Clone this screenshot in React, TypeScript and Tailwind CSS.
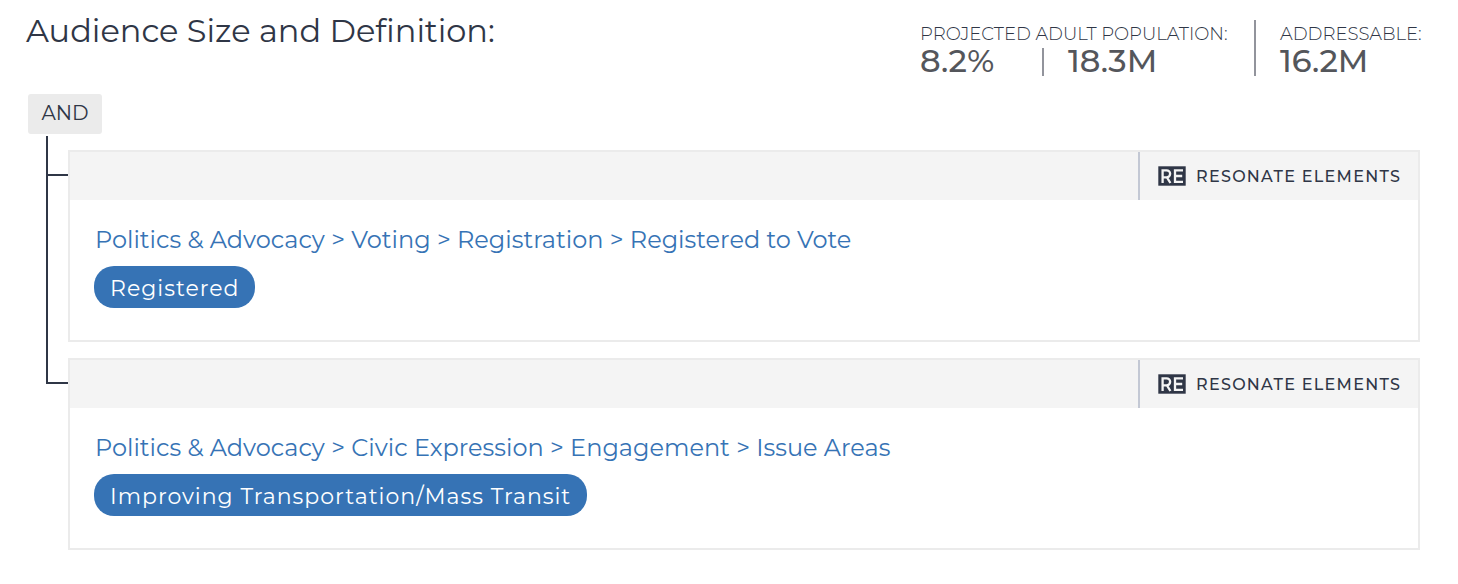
type Rule = { path: string[]; value: string };

const rules: Rule[] = [
  {
    path: ["Politics & Advocacy", "Voting", "Registration", "Registered to Vote"],
    value: "Registered",
  },
  {
    path: ["Politics & Advocacy", "Civic Expression", "Engagement", "Issue Areas"],
    value: "Improving Transportation/Mass Transit",
  },
];

function ElementsLogo() {
  return (
    <svg viewBox="0 0 28 20" className="h-5 w-7 shrink-0" aria-hidden="true">
      <rect x="0.3" y="0.3" width="27.4" height="19.4" fill="#2f3646" />
      <g fill="none" stroke="#f4f4f4" strokeWidth="2.3">
        <path d="M4.6 17V4.3H8.6A3.3 3.3 0 0 1 8.6 11.4H4.6M8.8 11.2L12.4 17" />
        <path d="M25 4.3H17V15.8H25M17 10H24.2" />
      </g>
    </svg>
  );
}

function StatLabel({ children }: { children: string }) {
  return (
    <div className="pt-1 text-[18px] leading-5 font-light whitespace-nowrap">{children}</div>
  );
}

function Stat({ children }: { children: string }) {
  return (
    <div className="pb-0.5 text-[32px] leading-[26px] font-medium text-[#54565b]">{children}</div>
  );
}

function RuleRow({ rule, last }: { rule: Rule; last: boolean }) {
  return (
    <li className="group flex">
      <div className="flex w-[22px] shrink-0 flex-col">
        <div className="h-[42px] border-b-2 border-l-2 border-[#2f3646] group-first:h-10" />
        {!last && <div className="flex-1 border-l-2 border-[#2f3646]" />}
      </div>
      <div className="min-w-0 flex-1 pt-4 group-first:pt-[14px]">
        <section className="border-2 border-[#ebebeb]">
          <header className="flex h-12 justify-end bg-[#f4f4f4]">
            <div className="flex w-[280px] items-center gap-[10px] border-l-2 border-[#c3c8d4] pl-[18px]">
              <ElementsLogo />
              <span className="pt-px text-[16px] font-medium tracking-[0.08em] whitespace-nowrap text-[#2f3646]">
                RESONATE ELEMENTS
              </span>
            </div>
          </header>
          <div className="flex flex-col items-start gap-[10px] px-6 pt-6 pb-8 text-[#3673b5]">
            <a href="#" className="pl-px text-[24px] leading-8">
              {rule.path.join(" > ")}
            </a>
            <span className="rounded-[20px] bg-[#3673b5] px-4 pt-[6px] pb-[2px] text-[22px] leading-[34px] tracking-[1px] text-white">
              {rule.value}
            </span>
          </div>
        </section>
      </div>
    </li>
  );
}

export default function App() {
  return (
    <main className="bg-white pt-2 pr-[38px] pb-8 pl-7 font-['Montserrat','Inter',sans-serif] text-[#2f3646]">
      <header className="flex items-start justify-between">
        <h1 className="-ml-0.5 text-[32px] leading-[46px]">Audience Size and Definition:</h1>
        <div className="flex pt-3">
          <div className="w-[336px] border-r-2 border-[#92949c]">
            <StatLabel>PROJECTED ADULT POPULATION:</StatLabel>
            <div className="flex pt-1">
              <div className="w-[124px] border-r-2 border-[#92949c]">
                <Stat>8.2%</Stat>
              </div>
              <div className="pl-6">
                <Stat>18.3M</Stat>
              </div>
            </div>
          </div>
          <div className="w-[164px] pl-6">
            <StatLabel>ADDRESSABLE:</StatLabel>
            <div className="pt-1">
              <Stat>16.2M</Stat>
            </div>
          </div>
        </div>
      </header>
      <div className="mt-[18px] flex h-10 w-[74px] items-center justify-center rounded-[3px] bg-[#ebebeb] pb-0.5 text-[20px]">
        AND
      </div>
      <ul className="mt-0.5 pl-[18px]">
        {rules.map((rule, i) => (
          <RuleRow key={rule.value} rule={rule} last={i === rules.length - 1} />
        ))}
      </ul>
    </main>
  );
}
